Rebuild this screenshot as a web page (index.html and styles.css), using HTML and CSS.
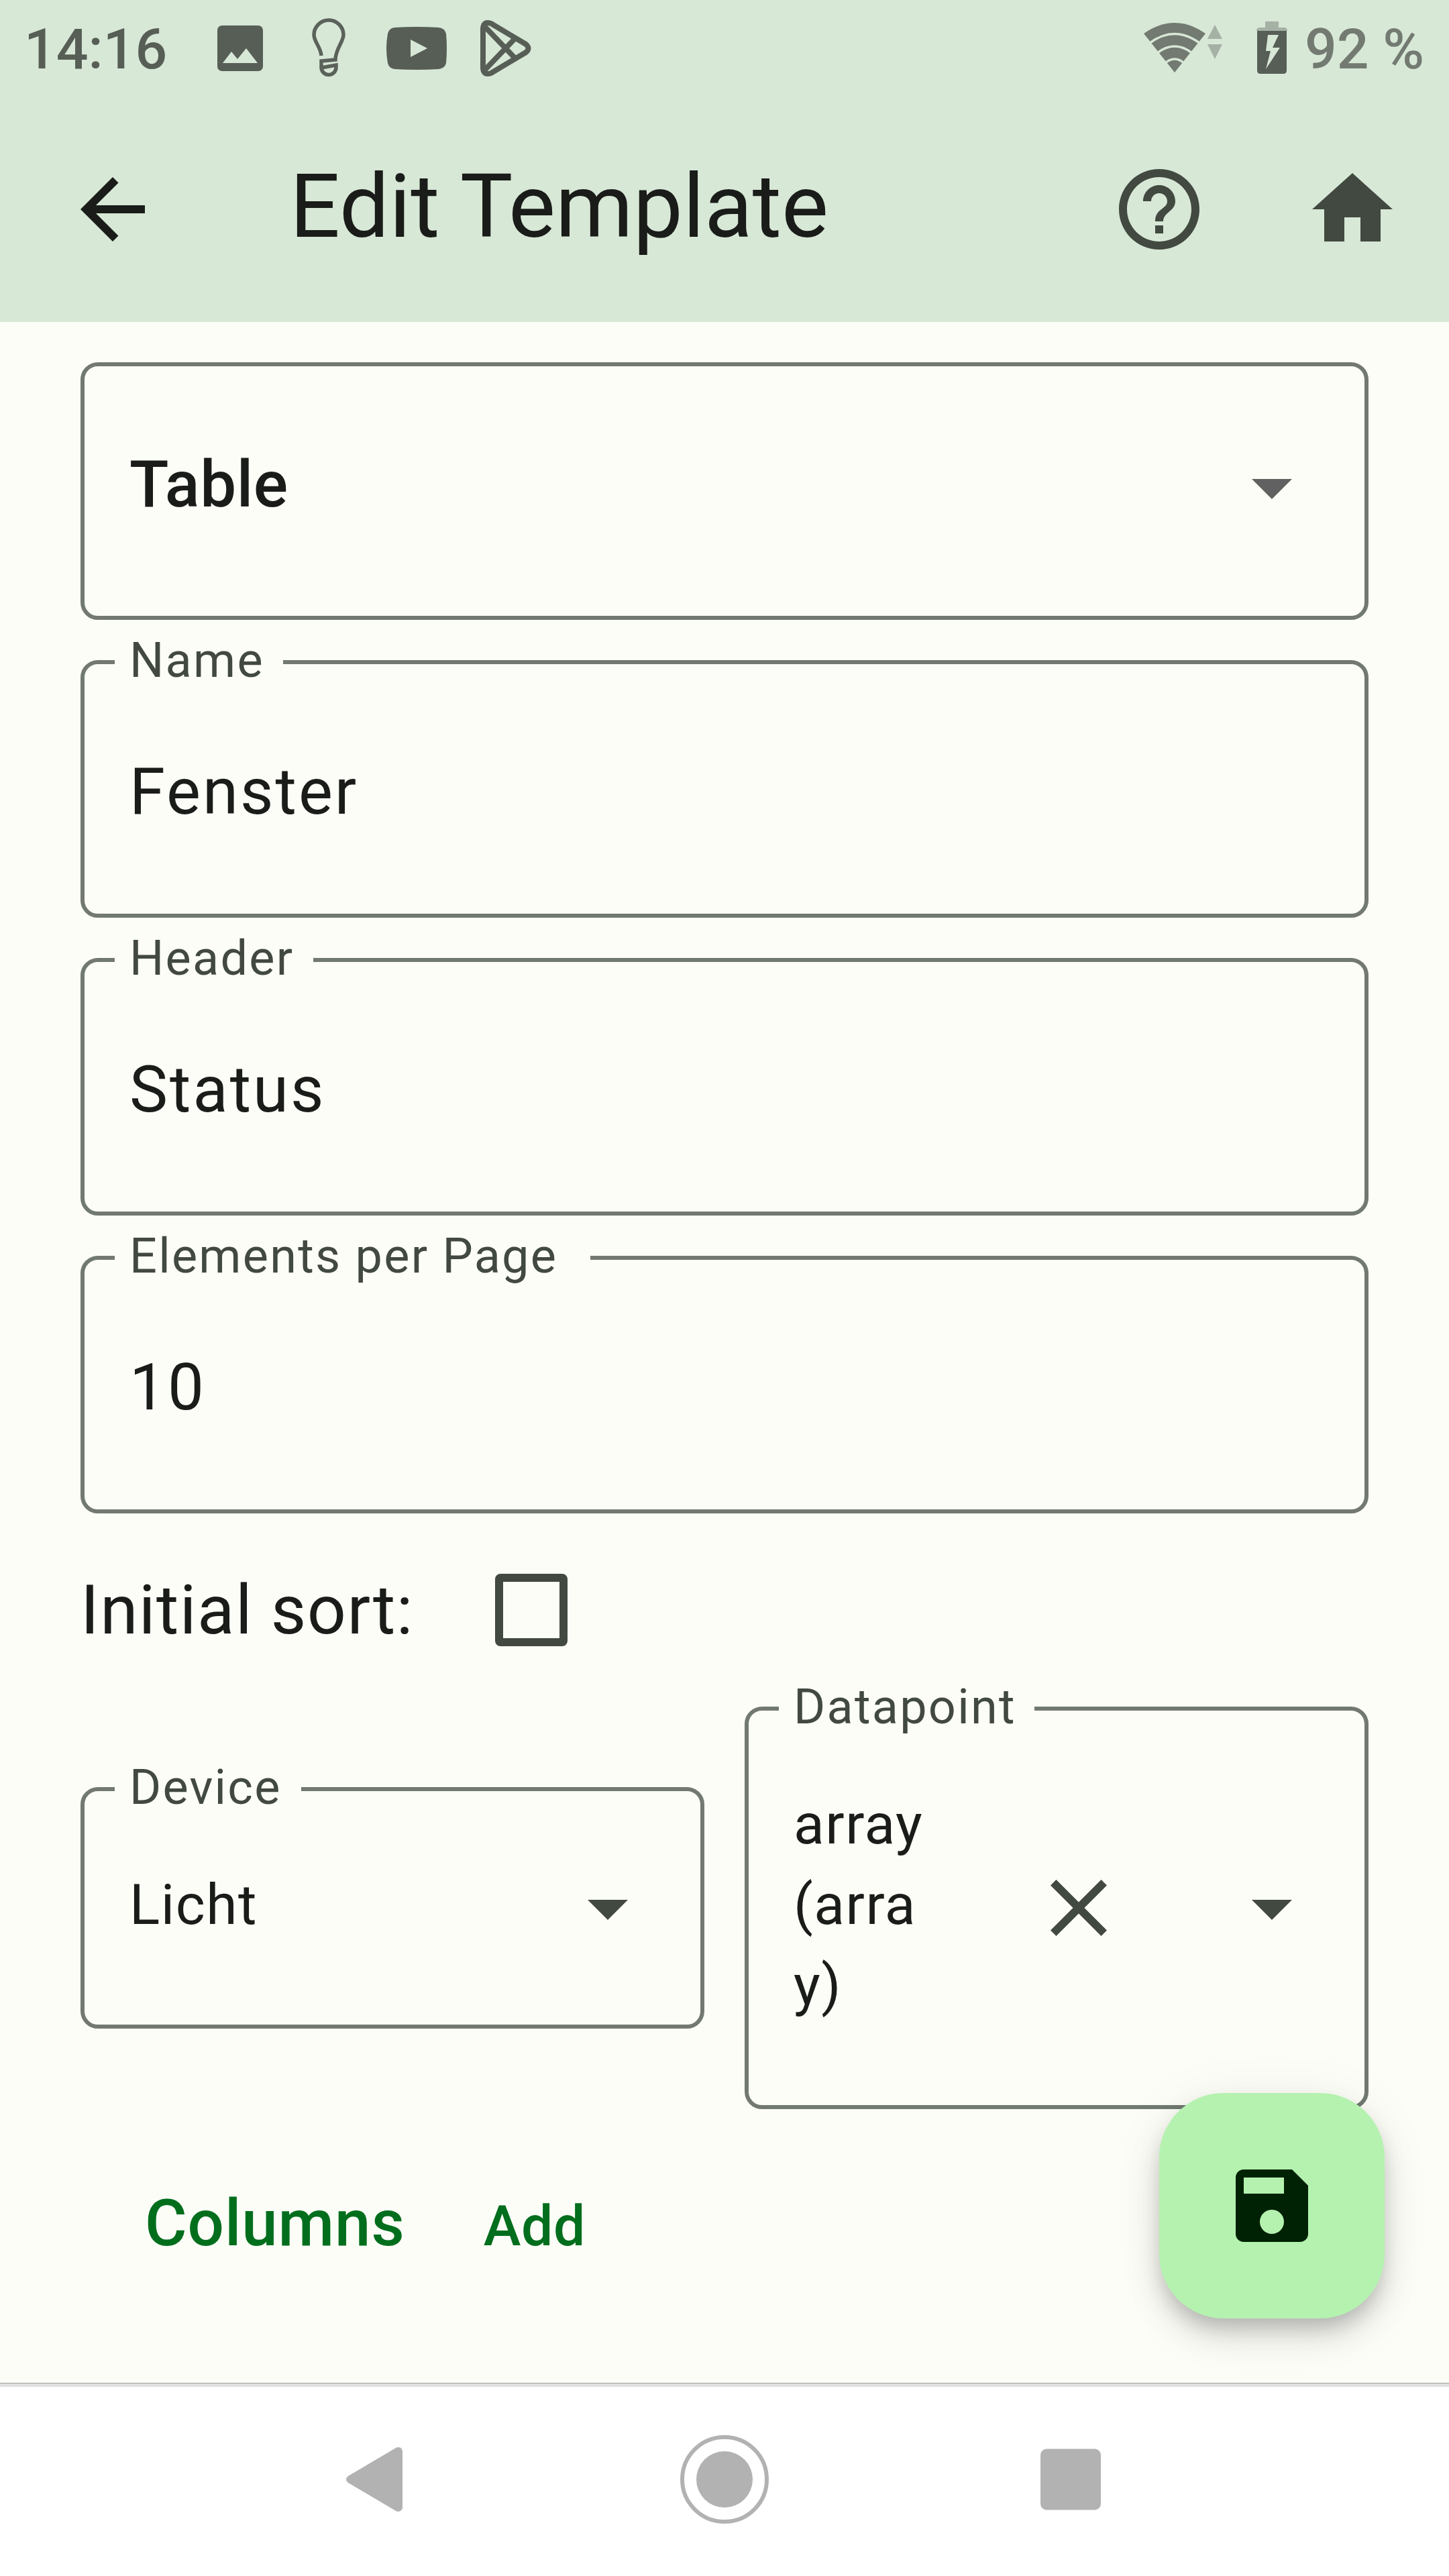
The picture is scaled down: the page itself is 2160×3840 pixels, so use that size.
FILE: index.html
```html
<!DOCTYPE html>
<html lang="en">
<head>
<meta charset="utf-8">
<title>Edit Template</title>
<link rel="stylesheet" href="styles.css">
</head>
<body>
<div class="screen">
  <div class="status-bar">
    <span class="clock">14:16</span>
    <svg class="notifications" width="480" height="100" viewBox="320 20 480 100">
      <path fill="#575e56" fill-rule="evenodd" d="M331 38h54a7 7 0 0 1 7 7v54a7 7 0 0 1-7 7h-54a7 7 0 0 1-7-7V45a7 7 0 0 1 7-7zM332 94h52l-17-22-13 16-9-11z"/>
      <path fill="none" stroke="#5b625a" stroke-width="5.5" d="M479 83c-1-13-11-21-11-31a22 22 0 0 1 44 0c0 10-12 21-12 37l-21 2v10a11 11 0 0 0 22-1v-3l-22 4"/>
      <path fill="#575e56" fill-rule="evenodd" d="M588 41q33-2 66 0 9 1 11 9 2 22 0 44-2 8-11 9-33 2-66 0-8-1-10-9-4-22 0-44 2-8 10-9zM612 59v26l25-13z"/>
      <g fill="none" stroke="#575e56" stroke-width="8" stroke-linejoin="round">
        <path d="M720 42q1-11 12-7l52 31q7 6 0 12l-52 31q-11 4-12-7z"/>
        <path d="M721 38l47 49M721 106l47-49"/>
      </g>
    </svg>
    <svg class="signals" width="220" height="100" viewBox="1703 20 220 100">
      <path fill="#727a71" d="M1705 50q46-32 92 0l-46 58z"/>
      <path fill="none" stroke="#d7e8d6" stroke-width="3.500" d="M1714 64q37-27 74 0M1725 79q26-20 52 0M1737 94q14-12 28 0"/>
      <path fill="#a5b1a4" d="M1800 58l11-21 11 21zM1800 66h22l-11 22zM1886 32h20v9h8q5 0 5 5h-46q0-5 5-5h8z"/>
      <path fill="#575e56" fill-rule="evenodd" d="M1874 46h44v59q0 5-5 5h-34q-5 0-5-5zM1890 52l-3 24h7l-7 27 21-32h-11l9-19z"/>
    </svg>
    <span class="battery">92 %</span>
  </div>
  <header class="app-bar">
    <svg class="icon back" viewBox="0 0 24 24"><path d="M20 11H7.83l5.59-5.59L12 4l-8 8 8 8 1.41-1.41L7.83 13H20v-2z"/></svg>
    <h1 class="title">Edit Template</h1>
    <svg class="icon" viewBox="0 0 24 24"><path d="M11 18h2v-2h-2v2zm1-16C6.48 2 2 6.48 2 12s4.48 10 10 10 10-4.48 10-10S17.52 2 12 2zm0 18c-4.41 0-8-3.59-8-8s3.59-8 8-8 8 3.59 8 8-3.59 8-8 8zm0-14c-2.21 0-4 1.79-4 4h2c0-1.1.9-2 2-2s2 .9 2 2c0 2-3 1.75-3 5h2c0-2.25 3-2.5 3-5 0-2.21-1.79-4-4-4z"/></svg>
    <svg class="icon" viewBox="0 0 24 24"><path d="M10 20v-6h4v6h5v-8h3L12 3 2 12h3v8z"/></svg>
  </header>
  <main class="form">
    <div class="field select">
      <span class="value strong">Table</span>
      <svg class="icon grey" viewBox="0 0 24 24"><path d="M7 10l5 5 5-5z"/></svg>
    </div>
    <div class="field"><span class="label name">Name</span><span class="value">Fenster</span></div>
    <div class="field"><span class="label header">Header</span><span class="value">Status</span></div>
    <div class="field"><span class="label elements">Elements per Page</span><span class="value">10</span></div>
    <div class="sort-row"><span class="sort-text">Initial sort:</span><span class="checkbox"></span></div>
    <div class="pair">
      <div class="field device">
        <span class="label device-label">Device</span>
        <span class="value small">Licht</span>
        <svg class="icon" viewBox="0 0 24 24"><path d="M7 10l5 5 5-5z"/></svg>
      </div>
      <div class="field datapoint">
        <span class="label datapoint-label">Datapoint</span>
        <span class="value small">array<br>(arra<br>y)</span>
        <svg class="icon clear" viewBox="0 0 24 24"><path d="M19 6.41L17.59 5 12 10.59 6.41 5 5 6.41 10.59 12 5 17.59 6.41 19 12 13.41 17.59 19 19 17.59 13.41 12z"/></svg>
        <svg class="icon" viewBox="0 0 24 24"><path d="M7 10l5 5 5-5z"/></svg>
      </div>
    </div>
    <div class="columns-row"><span class="columns">Columns</span><span class="add">Add</span></div>
  </main>
  <div class="fab"><svg class="icon" viewBox="0 0 24 24"><path d="M17 3H5c-1.11 0-2 .9-2 2v14c0 1.1.89 2 2 2h14c1.1 0 2-.9 2-2V7l-4-4zm-5 16c-1.66 0-3-1.34-3-3s1.34-3 3-3 3 1.34 3 3-1.34 3-3 3zm3-10H5V5h10v4z"/></svg></div>
  <nav class="nav-bar">
    <svg width="132" height="132" viewBox="0 0 132 132"><path d="M21 61L93 18.500q7-2 9 5v85q-2 7-9 5L21 71q-6-5 0-10z"/></svg>
    <svg width="132" height="132" viewBox="0 0 132 132"><circle cx="66" cy="66" r="42"/><circle class="ring" cx="66" cy="66" r="63"/></svg>
    <svg width="132" height="132" viewBox="0 0 132 132"><rect x="21" y="20.500" width="90" height="91" rx="9"/></svg>
  </nav>
</div>
</body>
</html>
```
FILE: styles.css
```css
* { box-sizing: border-box; }

body {
  margin: 0;
  font-family: Roboto, sans-serif;
  color: #1a1c19;
}

.screen {
  position: relative;
  display: flex;
  flex-direction: column;
  width: 2160px;
  height: 3840px;
  overflow: hidden;
  background: #fcfdf7;
}

svg { display: block; flex: none; }

.status-bar {
  display: flex;
  flex: none;
  height: 144px;
  padding: 20px 0 0 36px;
  background: #d7e8d6;
  font-size: 84px;
  line-height: 108px;
  white-space: nowrap;
}

.clock { width: 284px; color: #575e56; font-weight: 500; }
.notifications { margin-right: 903px; }
.signals { margin-right: 22px; }
.battery { color: #727a71; font-weight: 500; }

.app-bar {
  display: flex;
  flex: none;
  align-items: center;
  gap: 144px;
  height: 336px;
  padding: 0 72px 0 96px;
  background: #d7e8d6;
}

.icon { width: 144px; height: 144px; fill: #424940; }
.back { margin-right: 48px; fill: #1a1c19; }
.grey { fill: #616161; }

.title {
  flex: 1;
  margin: 0;
  padding-bottom: 9px;
  font-size: 132px;
  font-weight: 400;
  line-height: 168px;
  white-space: nowrap;
}

.form {
  display: flex;
  flex: 1;
  flex-direction: column;
  gap: 60px;
  padding: 60px 120px 0;
}

.field {
  position: relative;
  display: flex;
  flex: none;
  align-items: center;
  height: 384px;
  padding: 0 66px 0 67px;
  border: 6px solid #727970;
  border-radius: 26px;
}

.label {
  position: absolute;
  top: -47px;
  left: 45px;
  height: 84px;
  padding-left: 22px;
  background: #fcfdf7;
  color: #424940;
  font-size: 72px;
  line-height: 84px;
  letter-spacing: 2.25px;
  white-space: nowrap;
}

.name { width: 251px; }
.header { width: 296px; }
.elements { width: 709px; }
.device-label { width: 278px; }
.datapoint-label { width: 381px; }

.value {
  flex: 1;
  padding-top: 7px;
  font-size: 96px;
  line-height: 144px;
  letter-spacing: 3px;
}

.strong {
  padding: 0 0 20px;
  font-weight: 500;
  letter-spacing: 0.6px;
}

.select .icon { margin-bottom: 12px; }

.small {
  padding: 0 0 9px;
  font-size: 84px;
  line-height: 120px;
  letter-spacing: 1.5px;
}

.sort-row {
  display: flex;
  align-items: center;
  height: 168px;
}

.sort-text {
  width: 618px;
  font-size: 102px;
  line-height: 144px;
  letter-spacing: 1.4px;
  white-space: nowrap;
}

.checkbox {
  width: 108px;
  height: 108px;
  border: 12px solid #424940;
  border-radius: 8px;
}

.pair {
  display: grid;
  grid-template-columns: 1fr 1fr;
  align-items: center;
  gap: 60px;
}

.device { height: 360px; }
.datapoint { height: 600px; }
.clear { margin-right: 144px; }

.columns-row {
  display: flex;
  align-items: baseline;
  gap: 117px;
  padding: 50px 0 0 96px;
  color: #006e1c;
  font-weight: 500;
  line-height: 120px;
}

.columns { font-size: 96px; letter-spacing: 0.9px; }
.add { font-size: 84px; letter-spacing: 0.6px; }

.fab {
  position: absolute;
  top: 3120px;
  left: 1728px;
  display: grid;
  place-items: center;
  width: 336px;
  height: 336px;
  border-radius: 96px;
  background: #b5f2b0;
  box-shadow: 0 18px 30px -6px rgba(0, 0, 0, 0.2), 0 30px 54px rgba(0, 0, 0, 0.1), 0 6px 80px rgba(0, 0, 0, 0.06);
}

.fab .icon { fill: #002204; }

.nav-bar {
  display: flex;
  flex: none;
  align-items: center;
  justify-content: center;
  gap: 384px;
  height: 288px;
  background: linear-gradient(#9e9e9e 1px, #e0e0e0 1px 6px, #fff 6px);
}

.nav-bar svg { fill: #b2b2b2; }
.nav-bar .ring { fill: none; stroke: #b2b2b2; stroke-width: 6px; }
```
